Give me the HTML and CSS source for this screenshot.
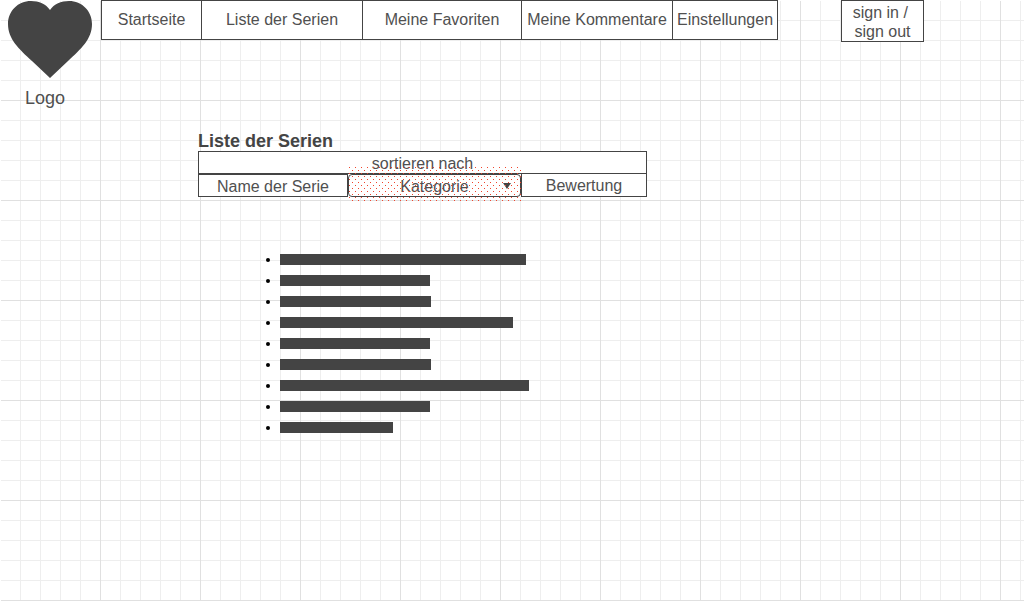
FILE: index.html
```html
<!DOCTYPE html>
<html lang="de">
<head>
<meta charset="utf-8">
<title>Liste der Serien</title>
<link rel="stylesheet" href="styles.css">
</head>
<body>
<header class="header">
  <a class="logo" href="#">
    <svg class="heart" viewBox="0 0 84 77" aria-hidden="true"><path d="M42 77L24 60C11 48 0 38 0 23C0 10 10 0 23 0C31 0 38 3 42 9C46 3 53 0 61 0C74 0 84 10 84 23C84 38 73 48 60 60Z"/></svg>
    <span>Logo</span>
  </a>
  <nav class="nav">
    <a class="tab home" href="#">Startseite</a>
    <a class="tab series" href="#">Liste der Serien</a>
    <a class="tab favorites" href="#">Meine Favoriten</a>
    <a class="tab comments" href="#">Meine Kommentare</a>
    <a class="tab settings" href="#">Einstellungen</a>
  </nav>
  <button class="sign" type="button">sign in /&nbsp;<br>sign out</button>
</header>
<main class="main">
  <h1 class="title">Liste der Serien</h1>
  <section class="sorting" aria-label="sortieren nach">
    <div class="sort-label">sortieren nach</div>
    <div class="sort-row">
      <button class="sort name" type="button">Name der Serie</button>
      <div class="category">
        <select class="select" aria-label="Kategorie"><option>Kategorie</option></select>
        <svg class="arrow" viewBox="0 0 8 6" aria-hidden="true"><path d="M0 0H8L4 6Z"/></svg>
      </div>
      <button class="sort rating" type="button">Bewertung</button>
    </div>
  </section>
  <ul class="list">
    <li class="item"><span class="bar" style="width:246px"></span></li>
    <li class="item"><span class="bar" style="width:150px"></span></li>
    <li class="item"><span class="bar" style="width:151px"></span></li>
    <li class="item"><span class="bar" style="width:233px"></span></li>
    <li class="item"><span class="bar" style="width:150px"></span></li>
    <li class="item"><span class="bar" style="width:151px"></span></li>
    <li class="item"><span class="bar" style="width:249px"></span></li>
    <li class="item"><span class="bar" style="width:150px"></span></li>
    <li class="item"><span class="bar" style="width:113px"></span></li>
  </ul>
</main>
</body>
</html>
```
FILE: styles.css
```css
* {
  box-sizing: border-box;
}

html {
  min-height: 100%;
  background-color: #fff;
  background-image:
    linear-gradient(#fff, #fff),
    linear-gradient(#fff, #fff),
    linear-gradient(90deg, #e0e0e0 1px, transparent 1px),
    linear-gradient(#e0e0e0 1px, transparent 1px),
    linear-gradient(90deg, #eee 1px, transparent 1px),
    linear-gradient(#eee 1px, transparent 1px);
  background-size: 100% 1px, 1px 100%, 100px 100px, 100px 100px, 20px 20px, 20px 20px;
  background-repeat: no-repeat, no-repeat, repeat, repeat, repeat, repeat;
}

body {
  margin: 0;
  font: 16px/19px "Liberation Sans", Arial, sans-serif;
  color: #505050;
}

button,
select {
  font: inherit;
  color: inherit;
  margin: 0;
  padding: 0;
}

.header {
  display: flex;
  align-items: flex-start;
}

.logo {
  display: flex;
  flex-direction: column;
  gap: 10px;
  width: 101px;
  padding: 1px 9px 0 8px;
  color: inherit;
  font-size: 18px;
  line-height: 20px;
  text-decoration: none;
}

.logo span {
  padding-left: 17px;
}

.heart {
  width: 84px;
  height: 77px;
  fill: #444;
}

.nav {
  display: flex;
  height: 40px;
  border: 1px solid #444;
  background: #fff;
}

.tab {
  display: flex;
  align-items: center;
  justify-content: center;
  padding-bottom: 2px;
  color: inherit;
  text-decoration: none;
  white-space: nowrap;
}

.tab + .tab {
  border-left: 1px solid #444;
}

.home { width: 99px; }
.series { width: 161px; }
.favorites { width: 159px; }
.comments { width: 151px; }
.settings { width: 105px; }

.sign {
  width: 83px;
  height: 42px;
  margin-left: 63px;
  padding-top: 2px;
  border: 1px solid #444;
  background: #fff;
}

.main {
  padding: 23px 0 0 198px;
}

.title {
  margin: 0;
  color: #444;
  font-size: 18px;
  line-height: 20px;
}

.sorting {
  width: 449px;
}

.sort-label {
  height: 23px;
  padding-top: 2px;
  border: 1px solid #444;
  background: #fff;
  text-align: center;
}

.sort-row {
  display: flex;
  height: 23px;
}

.sort {
  border: 1px solid #444;
  background: #fff;
}

.name {
  width: 150px;
  padding-top: 2px;
}

.rating {
  flex: 1;
  margin-top: -1px;
  padding-top: 1px;
}

.category {
  position: relative;
  width: 173px;
  background: #fff;
}

/* Halftone highlight drawn over the active filter */
.category::after {
  content: "";
  position: absolute;
  inset: -7px -1px -5px 1px;
  background-image:
    conic-gradient(from 0deg at 1px 1px, transparent 270deg, #f0442c 270deg),
    conic-gradient(from 0deg at 1px 1px, transparent 270deg, #f0442c 270deg);
  background-size: 6px 6px;
  background-position: 0 0, 3px 3px;
  pointer-events: none;
}

.select {
  appearance: none;
  width: 100%;
  height: 100%;
  padding-top: 2px;
  border: 1px solid #444;
  border-radius: 4px;
  background: transparent;
  text-align: center;
  text-align-last: center;
}

.arrow {
  position: absolute;
  top: 9px;
  right: 10px;
  width: 8px;
  height: 6px;
  fill: #444;
  pointer-events: none;
}

.list {
  display: flex;
  flex-direction: column;
  gap: 10px;
  margin: 57px 0 0;
  padding: 0 0 0 68px;
  list-style: none;
}

.item {
  display: flex;
  align-items: center;
  gap: 10px;
}

.item::before {
  content: "";
  width: 4px;
  height: 4px;
  border-radius: 50%;
  background: #000;
}

.bar {
  height: 11px;
  background: #444;
}
```
